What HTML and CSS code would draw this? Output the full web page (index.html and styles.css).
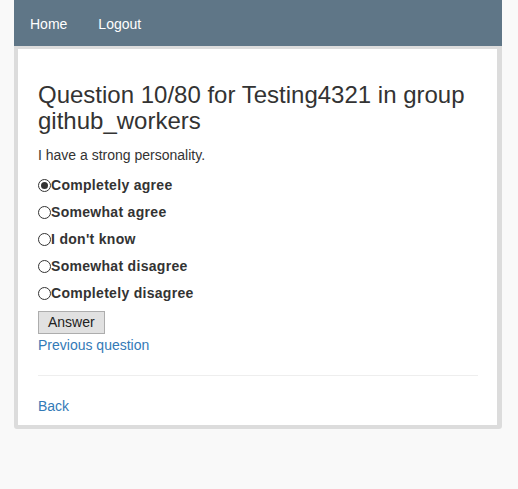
FILE: index.html
```html
<!DOCTYPE html>
<html>
<head>
<meta charset="utf-8">
<link rel="stylesheet" href="styles.css">
</head>
<body>
<div class="page">
  <nav class="navbar">
    <a class="nav-link" href="#">Home</a>
    <a class="nav-link" href="#">Logout</a>
  </nav>
  <div class="card">
    <h3 class="title">Question 10/80 for Testing4321 in group github_workers</h3>
    <p class="statement">I have a strong personality.</p>
    <form class="answers">
      <label class="option"><input type="radio" name="a" checked>Completely agree</label>
      <label class="option"><input type="radio" name="a">Somewhat agree</label>
      <label class="option"><input type="radio" name="a">I don't know</label>
      <label class="option"><input type="radio" name="a">Somewhat disagree</label>
      <label class="option"><input type="radio" name="a">Completely disagree</label>
      <button type="button" class="btn">Answer</button>
    </form>
    <a class="link link-prev" href="#">Previous question</a>
    <hr class="sep">
    <a class="link" href="#">Back</a>
  </div>
</div>
</body>
</html>
```
FILE: styles.css
```css
html, body {
  margin: 0;
  padding: 0;
  background: #f9f9f9;
  font-family: "Liberation Sans", Arial, sans-serif;
  font-size: 14px;
  line-height: 1.42857;
  color: #333;
}
.page {
  width: 488px;
  margin-left: 14px;
}
.navbar {
  box-sizing: border-box;
  background: #5f7687;
  height: 46px;
  display: flex;
  align-items: center;
  padding-left: 16px;
  padding-top: 3px;
  gap: 31px;
}
.nav-link {
  color: #fff;
  text-decoration: none;
  font-size: 14px;
}
.card {
  background: #fff;
  border: 4px solid #dcdcdc;
  border-top-width: 3px;
  border-right-width: 5px;
  border-radius: 0 0 3px 3px;
  padding: 13px 19px 8px 20px;
}
.title {
  font-size: 24px;
  font-weight: 500;
  line-height: 1.1;
  margin: 20px 0 11px;
  color: #333;
}
.statement {
  margin: 0 0 7px;
}
.answers {
  display: flex;
  flex-direction: column;
  align-items: flex-start;
}
.option {
  display: flex;
  align-items: center;
  font-weight: bold;
  height: 27px;
  letter-spacing: 0.3px;
}
.option input {
  appearance: none;
  -webkit-appearance: none;
  box-sizing: border-box;
  margin: 0 0 1px 0;
  width: 13px;
  height: 13px;
  border: 1px solid #333;
  border-radius: 50%;
  background: #fff;
  display: grid;
  place-items: center;
}
.option input:checked::after {
  content: "";
  width: 7px;
  height: 7px;
  border-radius: 50%;
  background: #333;
}
.btn {
  margin-top: 3px;
  font-family: "Liberation Sans", Arial, sans-serif;
  font-size: 14px;
  color: #222;
  background: #e1e1e1;
  border: 1px solid #adadad;
  padding: 1px 9px;
  height: 23px;
}
.link {
  color: #337ab7;
  text-decoration: none;
  display: block;
}
.link-prev {
  margin-top: 2px;
}
.sep {
  border: 0;
  border-top: 1px solid #eee;
  margin: 19px 0 21px;
}
```
